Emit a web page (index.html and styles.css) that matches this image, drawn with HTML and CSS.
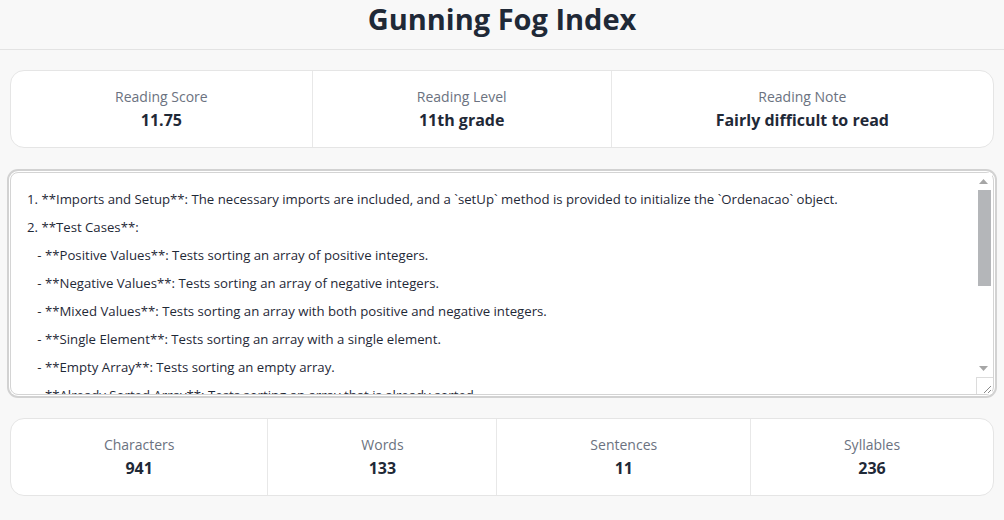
FILE: index.html
```html
<!DOCTYPE html>
<html lang="en">
<head>
<meta charset="utf-8">
<title>Gunning Fog Index</title>
<link rel="stylesheet" href="styles.css">
</head>
<body>
<header class="header">
  <h1 class="title">Gunning Fog Index</h1>
</header>
<main class="main">
  <section class="card">
    <div class="stat"><div class="label">Reading Score</div><div class="value">11.75</div></div>
    <div class="stat"><div class="label">Reading Level</div><div class="value">11th grade</div></div>
    <div class="stat"><div class="label">Reading Note</div><div class="value">Fairly difficult to read</div></div>
  </section>
  <div class="editor-wrap">
    <textarea class="editor" spellcheck="false">1. **Imports and Setup**: The necessary imports are included, and a `setUp` method is provided to initialize the `Ordenacao` object.
2. **Test Cases**:
   - **Positive Values**: Tests sorting an array of positive integers.
   - **Negative Values**: Tests sorting an array of negative integers.
   - **Mixed Values**: Tests sorting an array with both positive and negative integers.
   - **Single Element**: Tests sorting an array with a single element.
   - **Empty Array**: Tests sorting an empty array.
   - **Already Sorted Array**: Tests sorting an array that is already sorted.
   - **Reverse Sorted Array**: Tests sorting an array sorted in reverse order.
   - **Duplicates**: Tests sorting an array with duplicate values.
3. **Assertions**: Each test uses `assertArrayEquals` to check if the sorted array matches the expected result.</textarea>
    <div class="vscroll" aria-hidden="true">
      <div class="sb-btn">
        <svg width="9" height="5" viewBox="0 0 9 5"><path d="M0 5L4.5 0L9 5Z" fill="#a6a6a6"/></svg>
      </div>
      <div class="sb-track"><div class="sb-thumb"></div></div>
      <div class="sb-btn">
        <svg width="9" height="5" viewBox="0 0 9 5"><path d="M0 0L4.5 5L9 0Z" fill="#a6a6a6"/></svg>
      </div>
      <div class="sb-grip">
        <svg width="16" height="17" viewBox="0 0 16 17"><path d="M14 8L7 15M14 12L11 15" stroke="#8a8a8a" stroke-width="1" fill="none"/></svg>
      </div>
    </div>
  </div>
  <section class="card">
    <div class="stat"><div class="label">Characters</div><div class="value">941</div></div>
    <div class="stat"><div class="label">Words</div><div class="value">133</div></div>
    <div class="stat"><div class="label">Sentences</div><div class="value">11</div></div>
    <div class="stat"><div class="label">Syllables</div><div class="value">236</div></div>
  </section>
</main>
</body>
</html>
```
FILE: styles.css
```css
* { box-sizing: border-box; }
html, body { margin: 0; padding: 0; }
body {
  background: #f8f8f8;
  font-family: "Open Sans", "Noto Sans", sans-serif;
  color: #1f2937;
  width: 1004px;
  height: 520px;
  overflow: hidden;
}
.header {
  border-bottom: 1px solid #e3e3e3;
  padding: 0 0 12px;
}
.title {
  margin: 0;
  text-align: center;
  font-size: 29px;
  line-height: 37px;
  font-weight: 700;
  color: #1f2937;
}
.main {
  padding: 20px 10px 0;
  display: flex;
  flex-direction: column;
}
.card {
  display: flex;
  background: #fff;
  border: 1px solid #e5e5e5;
  border-radius: 14px;
}
.stat {
  flex: 1 1 auto;
  text-align: center;
  padding: 16px 10px 16px;
  border-left: 1px solid #e8e8e8;
}
.stat:first-child { border-left: 0; }
.label {
  font-size: 14px;
  line-height: 20px;
  color: #6b7280;
}
.value {
  margin-top: 2px;
  font-size: 16px;
  line-height: 22px;
  font-weight: 700;
  color: #1f2937;
}
.editor-wrap {
  position: relative;
  margin: 24px 0 23px;
}
.editor {
  display: block;
  width: 100%;
  height: 223px;
  border: 1px solid #d4d4d4;
  border-radius: 8px;
  box-shadow: 0 0 0 1px #fff, 0 0 0 3px #d2d2d2;
  outline: none;
  background: #fff;
  padding: 12px 34px 12px 16px;
  font-family: "Open Sans", "Noto Sans", sans-serif;
  font-size: 13.2px;
  line-height: 28px;
  color: #1f2937;
  resize: none;
  overflow: hidden;
}
.vscroll {
  position: absolute;
  top: 1px;
  bottom: 1px;
  right: 2px;
  width: 16px;
  display: flex;
  flex-direction: column;
  background: #fff;
}
.sb-btn {
  height: 17px;
  display: flex;
  align-items: center;
  justify-content: center;
  padding-right: 1px;
}
.sb-btn svg { display: block; }
.sb-track {
  flex: 1;
  padding: 0 1px 0 2px;
}
.sb-thumb {
  height: 96px;
  background: #b4b6b9;
}
.sb-grip {
  height: 17px;
  border-left: 1px solid #dcdcdc;
  border-top: 1px solid #dcdcdc;
  margin-right: -1px;
  margin-left: 0;
}
.sb-grip svg { display: block; }
```
